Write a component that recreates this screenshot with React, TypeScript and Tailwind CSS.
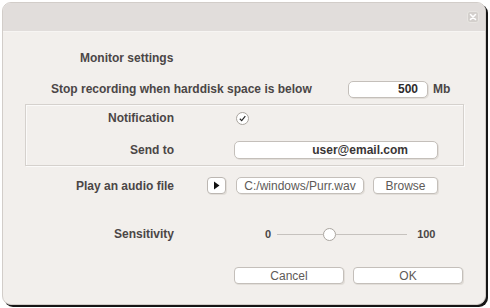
import React from 'react';

const font = "font-['Liberation_Sans',Arial,sans-serif]";

const Field = ({ className = '', children }: { className?: string; children?: React.ReactNode }) => (
    <div className={`h-[17px] bg-white border border-[#c4bfba] rounded-[5px] shadow-[1px_1px_0_#e2ded9] flex items-center ${className}`}>
        {children}
    </div>
);

const Label = ({ children }: { children: React.ReactNode }) => (
    <div className="w-[148px] text-right text-[12px] font-bold text-[#4b4646] leading-[16px]">{children}</div>
);

export default function App() {
    return (
        <div className={`w-[490px] h-[308px] bg-white pl-[2px] pt-[2px] ${font}`}>
            <div className="w-[484px] h-[303px] rounded-[9px] border border-[#d2cdc9] shadow-[2px_2px_0_#161616] overflow-hidden flex flex-col bg-[#f2efec]">
                {/* title bar */}
                <div className="h-[29px] bg-[#e1dddb] border-b border-[#f7f5f3] flex justify-end pt-[8px] pr-[6px]">
                    <div className="w-[12px] h-[12px] rounded-[3px] bg-[#d3cfcc] border border-[#e8e5e2] flex items-center justify-center">
                        <svg width="8" height="8" viewBox="0 0 8 8">
                            <path d="M1.5 1.5 L6.5 6.5 M6.5 1.5 L1.5 6.5" stroke="#fff" strokeWidth="1.6" strokeLinecap="round" />
                        </svg>
                    </div>
                </div>

                {/* heading */}
                <div className="mt-[18px] pl-[77px] text-[12px] font-bold text-[#4b4646] leading-[16px]">Monitor settings</div>

                {/* disk space */}
                <div className="mt-[14px] pl-[48px] flex items-center h-[18px]">
                    <div className="w-[297px] text-[12px] font-bold text-[#4b4646]">Stop recording when harddisk space is below</div>
                    <Field className="w-[80px] justify-end pr-[9px]">
                        <span className="text-[12px] font-bold text-[#2e2b2b]">500</span>
                    </Field>
                    <span className="ml-[5px] text-[12px] font-bold text-[#4b4646]">Mb</span>
                </div>

                {/* notification group */}
                <div className="mt-[6px] ml-[22px] w-[439px] h-[62px] border border-[#d5d1cd] shadow-[inset_1px_1px_0_#fbfaf9,1px_1px_0_#fbfaf9] pt-[4px] flex flex-col">
                    <div className="flex items-center h-[18px]">
                        <Label>Notification</Label>
                        <div className="ml-[62px] w-[13px] h-[13px] rounded-full bg-white border border-[#aaa59f] flex items-center justify-center">
                            <svg width="9" height="9" viewBox="0 0 9 9">
                                <path d="M1.8 4.8 L3.7 6.6 L7.3 2.2" fill="none" stroke="#2a2a2a" strokeWidth="1.2" />
                            </svg>
                        </div>
                    </div>
                    <div className="mt-[14px] flex items-center h-[18px]">
                        <Label>Send to</Label>
                        <Field className="ml-[60px] w-[204px] h-[18px] justify-end pr-[29px]">
                            <span className="text-[12px] font-bold text-[#3a3636]">user@email.com</span>
                        </Field>
                    </div>
                </div>

                {/* audio file */}
                <div className="mt-[11px] ml-[23px] flex items-center h-[17px]">
                    <Label>Play an audio file</Label>
                    <div className="ml-[33px] w-[19px] h-[17px] bg-white border border-[#bcb7b2] rounded-[4px] shadow-[1px_1px_0_#e2ded9] flex items-center justify-center">
                        <svg width="7" height="9" viewBox="0 0 7 9">
                            <path d="M1 0.5 L6.5 4.5 L1 8.5 Z" fill="#111" />
                        </svg>
                    </div>
                    <Field className="ml-[10px] w-[128px] justify-center">
                        <span className="text-[12px] text-[#5e5a58]">C:/windows/Purr.wav</span>
                    </Field>
                    <div className="ml-[9px] w-[65px] h-[17px] bg-white border border-[#c4bfba] rounded-[4px] shadow-[1px_1px_0_#e2ded9] flex items-center justify-center text-[12px] text-[#5e5a58]">
                        Browse
                    </div>
                </div>

                {/* sensitivity */}
                <div className="mt-[33px] ml-[23px] flex items-center h-[14px]">
                    <Label>Sensitivity</Label>
                    <span className="ml-[91px] text-[11px] font-bold text-[#4b4646]">0</span>
                    <div className="ml-[6px] w-[130px] h-[14px] flex items-center">
                        <div className="w-[46px] h-[1px] bg-[#c6c2be]" />
                        <div className="w-[13px] h-[13px] rounded-full bg-white border border-[#aaa59f] shrink-0" />
                        <div className="flex-1 h-[1px] bg-[#c6c2be]" />
                    </div>
                    <span className="ml-[10px] text-[11px] font-bold text-[#4b4646]">100</span>
                </div>

                {/* buttons */}
                <div className="mt-[26px] ml-[231px] flex gap-[9px]">
                    <div className="w-[110px] h-[17px] bg-white border border-[#c4bfba] rounded-[4px] shadow-[1px_1px_0_#e2ded9] flex items-center justify-center text-[12px] text-[#5e5a58]">
                        Cancel
                    </div>
                    <div className="w-[110px] h-[17px] bg-white border border-[#c4bfba] rounded-[4px] shadow-[1px_1px_0_#e2ded9] flex items-center justify-center text-[12px] text-[#5e5a58]">
                        OK
                    </div>
                </div>
            </div>
        </div>
    );
}
